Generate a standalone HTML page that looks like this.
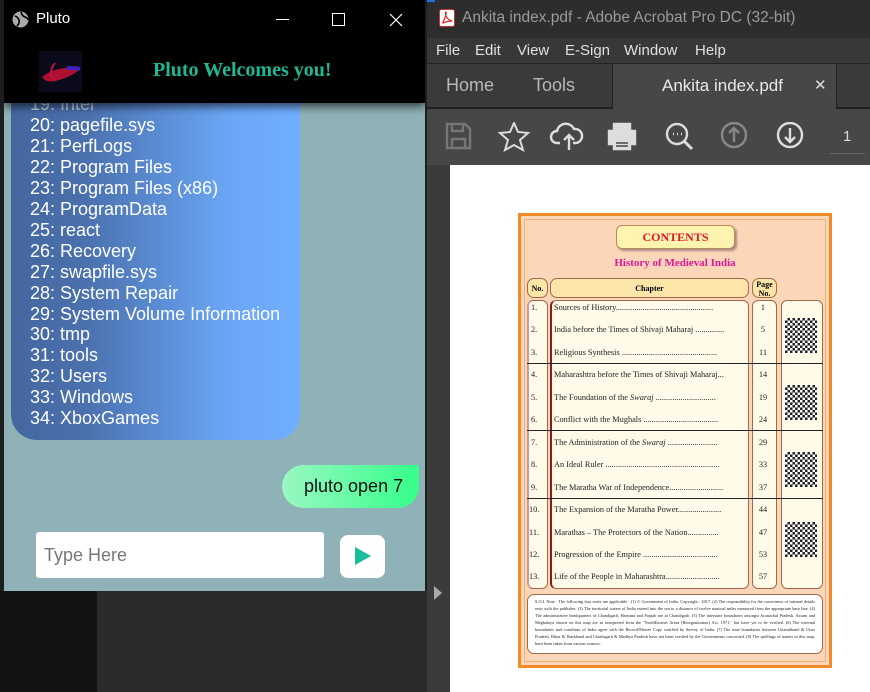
<!DOCTYPE html>
<html><head><meta charset="utf-8"><style>
*{margin:0;padding:0;box-sizing:border-box}
body{width:870px;height:692px;overflow:hidden;background:#1e1e1e;font-family:"Liberation Sans",sans-serif;position:relative}
.abs{position:absolute}
#pluto{left:4px;top:0;width:421px;height:591px;background:#8fb1b8;overflow:hidden}
#bubble{left:7px;top:80px;width:289px;height:360px;border-radius:0 0 26px 26px;background:linear-gradient(90deg,#44679f 0%,#4a70ad 25%,#6aa6f5 75%,#70afff 100%);color:#fff;font-size:18px;line-height:20.95px;padding:14px 0 0 19px}
#hdr{left:0;top:0;width:421px;height:103px;background:#000;box-shadow:0 4px 8px rgba(0,0,0,.6)}
.ac{color:#c8c8c8}
.m{position:absolute;top:42px;font-size:15px;color:#e0e0e0}
.r{display:flex}.r span:first-child{width:27px;padding-left:4px}.r span:nth-child(2){width:196px}.r span:nth-child(3){width:26px;text-align:center}
</style></head><body>
<div class="abs" style="left:0;top:591px;width:97px;height:101px;background:#121212"></div>
<div class="abs" style="left:97px;top:591px;width:330px;height:101px;background:#2b2b2b"></div>
<div id="pluto" class="abs">
 <div id="bubble" class="abs">
  <div style="color:#c8d4e6;margin-top:0">19: Intel</div>
  <div>20: pagefile.sys</div><div>21: PerfLogs</div><div>22: Program Files</div><div>23: Program Files (x86)</div><div>24: ProgramData</div><div>25: react</div><div>26: Recovery</div><div>27: swapfile.sys</div><div>28: System Repair</div><div>29: System Volume Information</div><div>30: tmp</div><div>31: tools</div><div>32: Users</div><div>33: Windows</div><div>34: XboxGames</div>
 </div>
 <div id="hdr" class="abs">
  <svg class="abs" style="left:8px;top:11px" width="17" height="17" viewBox="0 0 17 17"><circle cx="8.5" cy="8.5" r="8" fill="#aaa"/><path d="M3 5q3 1 4 4t-2 6M9 1q1 4 4 5t3 3" stroke="#000" stroke-width="1.6" fill="none"/></svg>
  <div class="abs" style="left:32px;top:10px;color:#fff;font-size:15px">Pluto</div>
  <div class="abs" style="left:272px;top:19px;width:13px;height:1px;background:#fff"></div>
  <div class="abs" style="left:328px;top:13px;width:13px;height:13px;border:1px solid #fff"></div>
  <svg class="abs" style="left:385px;top:13px" width="14" height="14"><path d="M1 1L13 13M13 1L1 13" stroke="#fff" stroke-width="1.2"/></svg>
  <div class="abs" style="left:35px;top:51px;width:43px;height:41px;background:#0a0a1a"><svg width="43" height="41"><path d="M3 26q15-12 38-8q-8 8-25 12q-9 2-13-4z" fill="#b01030"/><path d="M16 12q-8 10 0 18" stroke="#c01040" stroke-width="2" fill="none"/><path d="M28 17q10 0 13 1" stroke="#4020c0" stroke-width="4"/></svg></div>
  <div class="abs" style="left:149px;top:59px;color:#1fb894;font:bold 20px 'Liberation Serif',serif">Pluto Welcomes you!</div>
 </div>
 <div class="abs" style="left:278px;top:465px;width:137px;height:43px;border-radius:22px 0 22px 22px;background:linear-gradient(90deg,#9af7c2,#35ff8a);font-size:18px;line-height:43px;padding-left:22px;color:#111">pluto open 7</div>
 <div class="abs" style="left:32px;top:532px;width:288px;height:46px;background:#fff;border-radius:3px;color:#777;font-size:18px;line-height:46px;padding-left:8px">Type Here</div>
 <div class="abs" style="left:336px;top:535px;width:45px;height:43px;background:#fff;border-radius:8px"><svg class="abs" style="left:15px;top:12px" width="16" height="18"><path d="M0 0L16 9L0 18z" fill="#1abc9c"/></svg></div>
</div>
<!-- Acrobat -->
<div class="abs" style="left:427px;top:0;width:443px;height:38px;background:#2d2d2d"></div>
<div class="abs" style="left:427px;top:0;width:8px;height:2px;background:#1a73e8"></div>
<svg class="abs" style="left:439px;top:9px" width="16" height="18"><rect x="0.5" y="0.5" width="15" height="17" rx="2" fill="#fff" stroke="#c33"/><path d="M4 13q4-8 3-10q-1 0 0 4q2 4 6 5q-4 0-9 2z" stroke="#d22" fill="none" stroke-width="1.2"/></svg>
<div class="abs ac" style="left:462px;top:9px;font-size:15.5px;color:#9a9a9a">Ankita index.pdf - Adobe Acrobat Pro DC (32-bit)</div>
<div class="abs" style="left:427px;top:38px;width:443px;height:26px;background:#383838;border-bottom:1px solid #222"></div>
<span class="m" style="left:436px">File</span><span class="m" style="left:475px">Edit</span><span class="m" style="left:517px">View</span><span class="m" style="left:565px">E-Sign</span><span class="m" style="left:624px">Window</span><span class="m" style="left:695px">Help</span>
<div class="abs" style="left:427px;top:64px;width:443px;height:44px;background:#3a3a3a;border-bottom:1px solid #222"></div>
<div class="abs" style="left:612px;top:64px;width:225px;height:45px;background:#474747;border-left:1px solid #222;border-right:1px solid #222"></div>
<div class="abs" style="left:446px;top:75px;font-size:18px;color:#b8b8b8">Home</div>
<div class="abs" style="left:533px;top:75px;font-size:18px;color:#b8b8b8">Tools</div>
<div class="abs" style="left:662px;top:76px;font-size:17px;color:#e8e8e8">Ankita index.pdf</div>
<div class="abs" style="left:814px;top:76px;font-size:15px;color:#ddd">✕</div>
<div class="abs" style="left:427px;top:109px;width:443px;height:56px;background:#474747"></div>
<svg class="abs" style="left:445px;top:122px" width="400" height="30" fill="none" stroke-width="2.4">
 <path d="M2 2h18l5 5v19H2z M7 2v7h11V2 M7 26v-9h13v9" stroke="#777"/>
 <path d="M69 1l4 9 10 1-8 7 3 10-9-5-9 5 3-10-8-7 10-1z" stroke="#ddd" stroke-width="2"/>
 <path d="M115 21h-3a6 6 0 0 1 0-12a9 9 0 0 1 17-2a7 7 0 0 1 2 14h-3M124 28V13m-5 5l5-5 5 5" stroke="#ddd"/>
 <path d="M169 9V2h16v7M164 9h26v13h-26zM169 18h16v9h-16z" stroke="#ddd" fill="#ddd"/><path d="M171 21h12M171 24h12" stroke="#474747" stroke-width="1.5"/>
 <circle cx="232" cy="12" r="10" stroke="#ddd"/><path d="M239 19l8 8" stroke="#ddd" stroke-width="3"/><path d="M228 12h1M232 12h1M236 12h1" stroke="#ddd"/>
 <circle cx="289" cy="13" r="12" stroke="#888"/><path d="M289 20V6m-5 5l5-5 5 5" stroke="#888"/>
 <circle cx="345" cy="13" r="12" stroke="#ddd"/><path d="M345 6v14m-5-5l5 5 5-5" stroke="#ddd"/>
</svg>
<div class="abs" style="left:843px;top:128px;font-size:15px;color:#ddd">1</div>
<div class="abs" style="left:830px;top:153px;width:35px;height:1px;background:#666"></div>
<div class="abs" style="left:427px;top:165px;width:23px;height:527px;background:#3b3b3b"></div>
<svg class="abs" style="left:434px;top:586px" width="8" height="14"><path d="M0 0L8 7L0 14z" fill="#aaa"/></svg>
<div class="abs" style="left:450px;top:165px;width:420px;height:527px;background:#fff"></div>
<!-- PDF page -->
<div class="abs" style="left:518px;top:213px;width:314px;height:455px;background:#fcd6b8;border:3px solid #f28a2a;outline:1px solid #f6b070;outline-offset:-7px"></div>
<div class="abs" style="left:616px;top:225px;width:119px;height:24px;background:#fff3b0;border:1px solid #b98a5a;border-radius:6px;box-shadow:2px 2px 2px #a88;text-align:center;font:bold 12px 'Liberation Serif',serif;color:#e0182a;line-height:23px">CONTENTS</div>
<div class="abs" style="left:518px;top:257px;width:314px;text-align:center;font:bold 11px 'Liberation Serif',serif;color:#e0189a">History of Medieval India</div>
<div class="abs" style="left:527px;top:278px;width:21px;height:20px;background:#fbe5a8;border:1px solid #a06a4a;border-radius:7px;font:bold 8px 'Liberation Serif',serif;text-align:center;line-height:19px">No.</div>
<div class="abs" style="left:550px;top:278px;width:199px;height:20px;background:#fbe5a8;border:1px solid #a06a4a;border-radius:7px;font:bold 8px 'Liberation Serif',serif;text-align:center;line-height:19px">Chapter</div>
<div class="abs" style="left:752px;top:278px;width:25px;height:20px;background:#fbe5a8;border:1px solid #a06a4a;border-radius:7px;font:bold 8px 'Liberation Serif',serif;text-align:center;line-height:9px;padding-top:1px">Page<br>No.</div>
<div class="abs" style="left:527px;top:300px;width:21px;height:289px;background:#fffbe8;border:1px solid #a06a4a;border-radius:6px;border-left:2px solid #c9a"></div>
<div class="abs" style="left:550px;top:300px;width:199px;height:289px;background:#fffbe8;border:1px solid #a06a4a;border-radius:6px;border-left:2px solid #8b1a1a"></div>
<div class="abs" style="left:752px;top:300px;width:25px;height:289px;background:#fffbe8;border:1px solid #a06a4a;border-radius:6px"></div>
<div class="abs" style="left:781px;top:300px;width:42px;height:289px;background:#fffbe8;border:1px solid #a06a4a;border-radius:6px"></div>
<div class="abs" style="left:527px;top:363px;width:296px;height:1px;background:#222"></div>
<div class="abs" style="left:527px;top:430px;width:296px;height:1px;background:#222"></div>
<div class="abs" style="left:527px;top:498px;width:296px;height:1px;background:#222"></div>
<div class="abs" style="left:785px;top:318px;width:32px;height:35px;background:repeating-conic-gradient(#222 0 25%,#fff 0 50%) 0 0/5px 5px"></div>
<div class="abs" style="left:785px;top:385px;width:32px;height:35px;background:repeating-conic-gradient(#222 0 25%,#fff 0 50%) 0 0/5px 5px"></div>
<div class="abs" style="left:785px;top:452px;width:32px;height:35px;background:repeating-conic-gradient(#222 0 25%,#fff 0 50%) 0 0/5px 5px"></div>
<div class="abs" style="left:785px;top:522px;width:32px;height:35px;background:repeating-conic-gradient(#222 0 25%,#fff 0 50%) 0 0/5px 5px"></div>
<div class="abs" style="left:527px;top:297px;width:250px;font:8.3px 'Liberation Serif',serif;color:#222;line-height:22.45px;white-space:nowrap">
<div class="r"><span>1.</span><span style="overflow:hidden">Sources of History...............................................</span><span>1</span></div>
<div class="r"><span>2.</span><span style="overflow:hidden">India before the Times of Shivaji Maharaj ..............</span><span>5</span></div>
<div class="r"><span>3.</span><span style="overflow:hidden">Religious Synthesis ..............................................</span><span>11</span></div>
<div class="r"><span>4.</span><span style="overflow:hidden">Maharashtra before the Times of Shivaji Maharaj...</span><span>14</span></div>
<div class="r"><span>5.</span><span style="overflow:hidden">The Foundation of the <i>Swaraj</i> .............................</span><span>19</span></div>
<div class="r"><span>6.</span><span style="overflow:hidden">Conflict with the Mughals ....................................</span><span>24</span></div>
<div class="r"><span>7.</span><span style="overflow:hidden">The Administration of the <i>Swaraj</i> ........................</span><span>29</span></div>
<div class="r"><span>8.</span><span style="overflow:hidden">An Ideal Ruler .......................................................</span><span>33</span></div>
<div class="r"><span>9.</span><span style="overflow:hidden">The Maratha War of Independence..........................</span><span>37</span></div>
<div class="r"><span style="padding-left:2px">10.</span><span style="overflow:hidden">The Expansion of the Maratha Power.....................</span><span>44</span></div>
<div class="r"><span style="padding-left:2px">11.</span><span style="overflow:hidden">Marathas – The Protectors of the Nation...............</span><span>47</span></div>
<div class="r"><span style="padding-left:2px">12.</span><span style="overflow:hidden">Progression of the Empire ....................................</span><span>53</span></div>
<div class="r"><span style="padding-left:2px">13.</span><span style="overflow:hidden">Life of the People in Maharashtra..........................</span><span>57</span></div>
</div>
<div class="abs" style="left:527px;top:594px;width:296px;height:60px;background:#fff;border:1px solid #a06a4a;border-radius:7px;font:4.3px 'Liberation Serif',serif;color:#222;line-height:7px;padding:3px 7px;text-align:justify;overflow:hidden">S.O.I. Note : The following foot notes are applicable : (1) © Government of India, Copyright : 2017. (2) The responsibility for the correctness of internal details rests with the publisher. (3) The territorial waters of India extend into the sea to a distance of twelve nautical miles measured from the appropriate base line. (4) The administrative headquarters of Chandigarh, Haryana and Punjab are at Chandigarh. (5) The interstate boundaries amongst Arunachal Pradesh, Assam and Meghalaya shown on this map are as interpreted from the "NorthEastern Areas (Reorganisation) Act. 1971," but have yet to be verified. (6) The external boundaries and coastlines of India agree with the Record/Master Copy certified by Survey of India. (7) The state boundaries between Uttarakhand &amp; Uttar Pradesh, Bihar &amp; Jharkhand and Chattisgarh &amp; Madhya Pradesh have not been verified by the Governments concerned. (8) The spellings of names in this map, have been taken from various sources.</div>
</body></html>
